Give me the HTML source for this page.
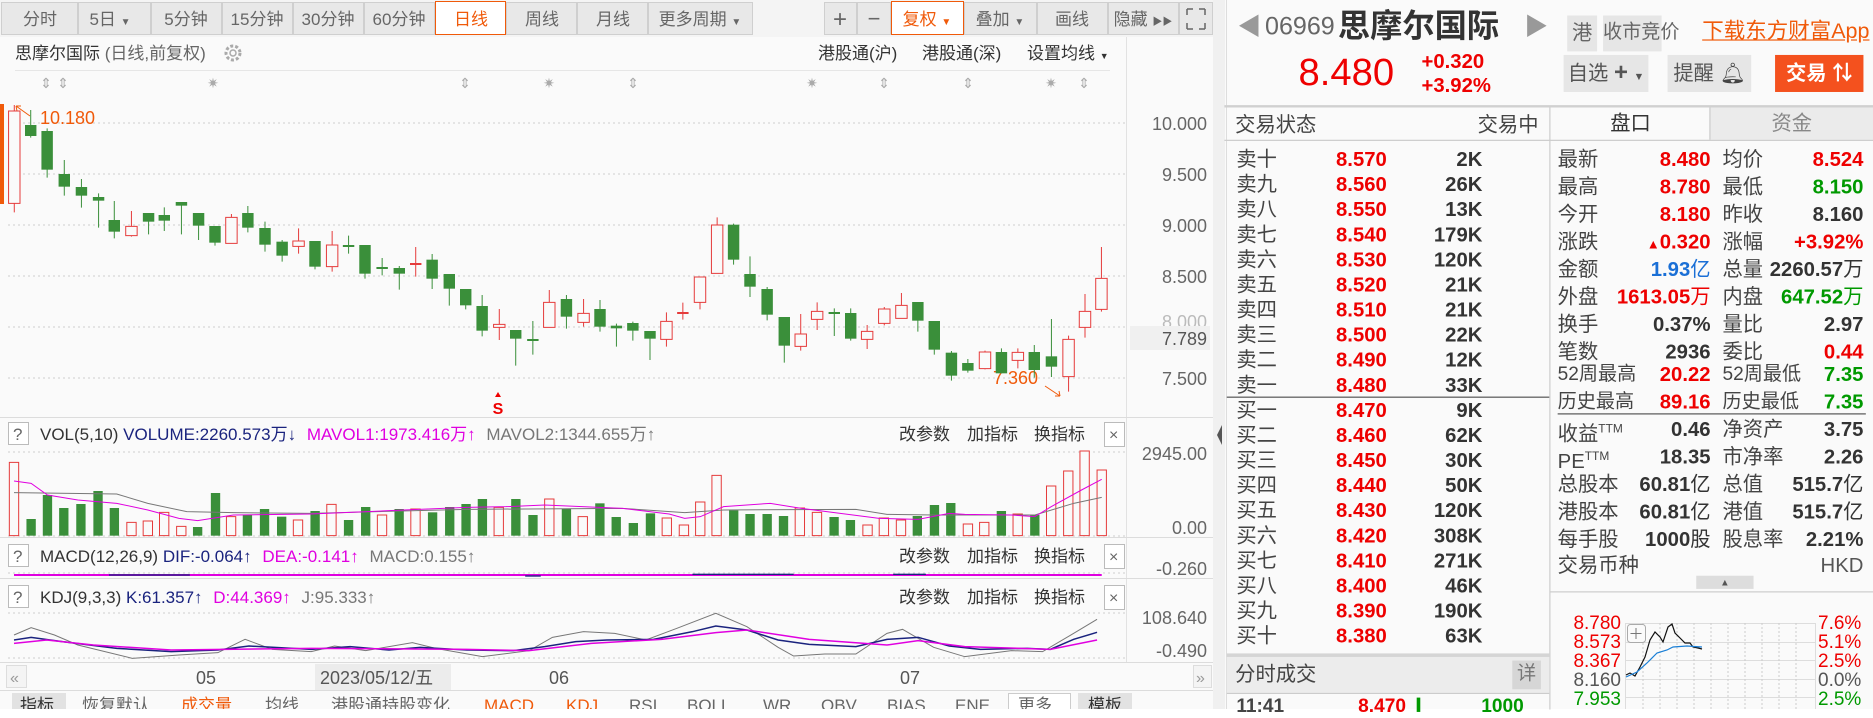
<!DOCTYPE html>
<html><head><meta charset="utf-8">
<style>
*{margin:0;padding:0;box-sizing:border-box}
body{width:1873px;height:709px;overflow:hidden;background:#fff;font-family:"Liberation Sans","Noto Sans CJK SC",sans-serif;position:relative}
#svg{position:absolute;left:0;top:0}
#rp{position:absolute;left:0;top:0;width:1568px;height:594px;transform:scale(1.19452);transform-origin:0 0;pointer-events:none}
#rp div{position:absolute;white-space:nowrap}
.l{color:#444;font-size:17px;line-height:20px}
.v{font-weight:bold;font-size:17px;line-height:20px;text-align:right}
.r{color:#e00}.g{color:#090}.k{color:#333}.b{color:#1a6fd6}
.btn{background:#e6e6e6;color:#555;font-size:17px;line-height:30px;text-align:center}
</style></head><body>
<svg id="svg" width="1873" height="709" viewBox="0 0 1873 709" font-family="Liberation Sans, Noto Sans CJK SC, sans-serif">
<rect x="0" y="0" width="1225" height="709" fill="#fafafa"/>
<rect x="1213" y="0" width="12" height="709" fill="#f0f0f0"/>
<path d="M1222 425l-5 10 5 10z" fill="#555"/>
<!-- toolbar -->
<rect x="0" y="0" width="1213" height="37" fill="#f4f4f4"/>
<g fill="#e8e8e8" stroke="#cfcfcf">
<rect x="1.5" y="2.5" width="76" height="32"/><rect x="78.5" y="2.5" width="72" height="32"/><rect x="151.5" y="2.5" width="70" height="32"/><rect x="222.5" y="2.5" width="70" height="32"/><rect x="293.5" y="2.5" width="70" height="32"/><rect x="364.5" y="2.5" width="70" height="32"/><rect x="506.5" y="2.5" width="70" height="32"/><rect x="577.5" y="2.5" width="70" height="32"/><rect x="648.5" y="2.5" width="104" height="32"/>
<rect x="824.5" y="2.5" width="32" height="32"/><rect x="857.5" y="2.5" width="33" height="32"/><rect x="964.5" y="2.5" width="72" height="32"/><rect x="1037.5" y="2.5" width="70" height="32"/><rect x="1108.5" y="2.5" width="70" height="32"/><rect x="1179.5" y="2.5" width="33" height="32"/>
</g>
<rect x="435.5" y="1.5" width="70" height="33" fill="#fff" stroke="#f05a0a"/>
<rect x="891.5" y="1.5" width="72" height="33" fill="#fff" stroke="#f05a0a"/>
<g font-size="17" fill="#666" text-anchor="middle">
<text x="40" y="25">分时</text><text x="110" y="25">5日 <tspan font-size="10">▼</tspan></text><text x="186" y="25">5分钟</text><text x="257" y="25">15分钟</text><text x="328" y="25">30分钟</text><text x="399" y="25">60分钟</text><text x="471" y="25" fill="#f05a0a">日线</text><text x="542" y="25">周线</text><text x="613" y="25">月线</text><text x="700" y="25">更多周期 <tspan font-size="10">▼</tspan></text>
<text x="840" y="27" font-size="24">+</text><text x="874" y="26" font-size="22">−</text><text x="927" y="25" fill="#f05a0a">复权 <tspan font-size="10">▼</tspan></text><text x="1000" y="25">叠加 <tspan font-size="10">▼</tspan></text><text x="1072" y="25">画线</text><text x="1143" y="25">隐藏 <tspan font-size="10">▶▶</tspan></text>
</g>
<path d="M1187 9h6M1187 9v6M1205 9h-6M1205 9v6M1187 29h6M1187 29v-6M1205 29h-6M1205 29v-6" stroke="#666" stroke-width="1.5" fill="none"/>
<!-- header -->
<text x="15" y="59" font-size="17" fill="#333">思摩尔国际 <tspan fill="#666">(日线,前复权)</tspan></text>
<circle cx="233" cy="53" r="7" fill="none" stroke="#aaa" stroke-width="3" stroke-dasharray="3 2"/><circle cx="233" cy="53" r="3" fill="none" stroke="#aaa" stroke-width="1.5"/>
<g font-size="17" fill="#333"><text x="818" y="59">港股通(沪)</text><text x="922" y="59">港股通(深)</text><text x="1027" y="59">设置均线 <tspan font-size="9">▼</tspan></text></g>
<line x1="15" y1="70.5" x2="1110" y2="70.5" stroke="#e6e6e6"/>
<g font-size="14" fill="#aaa" text-anchor="middle"><text x="46" y="88">⇕</text><text x="63" y="88">⇕</text><text x="465" y="88">⇕</text><text x="633" y="88">⇕</text><text x="884" y="88">⇕</text><text x="968" y="88">⇕</text><text x="1084" y="88">⇕</text>
<text x="213" y="88">✷</text><text x="549" y="88">✷</text><text x="812" y="88">✷</text><text x="1051" y="88">✷</text></g>
<!-- main chart -->
<rect x="0" y="104" width="4" height="100" fill="#f05a0a"/>
<line x1="1126.5" y1="37" x2="1126.5" y2="662" stroke="#e2e2e2"/>
<g stroke="#cfcfcf" stroke-dasharray="2 3"><line x1="8" y1="123" x2="1126" y2="123"/><line x1="8" y1="174" x2="1126" y2="174"/><line x1="8" y1="225" x2="1126" y2="225"/><line x1="8" y1="276" x2="1126" y2="276"/><line x1="8" y1="327" x2="1126" y2="327"/><line x1="8" y1="378" x2="1126" y2="378"/></g>
<g font-size="18" fill="#666" text-anchor="end"><text x="1207" y="130">10.000</text><text x="1207" y="181">9.500</text><text x="1207" y="232">9.000</text><text x="1207" y="283">8.500</text><text x="1207" y="385">7.500</text><text x="1207" y="328" fill="#bbb">8.000</text></g>
<rect x="1130" y="326" width="80" height="24" fill="#f0f0f0"/><text x="1207" y="345" font-size="18" fill="#555" text-anchor="end">7.789</text>
<text x="40" y="124" font-size="18" fill="#f05a0a">10.180</text><path d="M16 106l14 10M16 106l5 0M16 106l1 5" stroke="#f05a0a" fill="none"/>
<text x="993" y="384" font-size="18" fill="#f05a0a">7.360</text><path d="M1045 386l15 10M1060 396l-5 0M1060 396l-1-5" stroke="#f05a0a" fill="none"/>
<text x="498" y="414" font-size="16" font-weight="bold" fill="#e00" text-anchor="middle">S</text><path d="M495 397l3-5 3 5z" fill="#e00"/>
<g transform="translate(0,95) scale(0.714286,0.333333)">
<path vector-effect="non-scaling-stroke" stroke="#3a8f3a" stroke-width="1" fill="none" d="M43 45V128M66 100V248M90 195V302M114 252V338M138 295V398M160 318V430M208 354V418M230 337V408M254 321V418M278 354V435M301 393V452M347 333V412M371 380V470M395 435V500M441 438V523M488 422V476M511 450V551M535 489V541M559 513V584M605 477V582M629 537V632M652 582V643M675 600V724M722 705V812M746 678V779M793 600V701M840 615V710M863 686V755M886 680V737M910 708V795M1027 386V509M1050 484V606M1074 576V676M1098 666V803M1168 640V723M1191 640V737M1285 621V710M1308 678V779M1332 768V857M1355 792V833M1402 760V835M1448 750V848M1472 672V846"/>
<path vector-effect="non-scaling-stroke" stroke="#e53b3b" stroke-width="1" fill="none" d="M20 30V352M184 348V425M324 357V445M418 400V476M465 408V530M582 456V545M699 642V735M769 585V697M817 612V695M933 652V755M956 623V674M980 546V643M1004 367V535M1121 657V767M1144 622V705M1214 690V762M1238 636V691M1262 594V670M1379 767V823M1425 760V820M1496 722V890M1519 597V728M1542 456V650"/>
<g fill="#3a8f3a">
<rect x="35" y="90" width="16" height="33"/><rect x="58" y="108" width="16" height="116"/><rect x="82" y="237" width="16" height="38"/><rect x="106" y="276" width="16" height="26"/><rect x="130" y="306" width="16" height="11"/><rect x="152" y="375" width="16" height="35"/><rect x="200" y="354" width="16" height="26"/><rect x="222" y="360" width="16" height="17"/><rect x="246" y="321" width="16" height="11"/><rect x="270" y="354" width="16" height="38"/><rect x="293" y="393" width="16" height="50"/><rect x="339" y="354" width="16" height="44"/><rect x="363" y="399" width="16" height="50"/><rect x="387" y="440" width="16" height="42"/><rect x="433" y="438" width="16" height="77"/><rect x="480" y="450" width="16" height="6"/><rect x="503" y="450" width="16" height="86"/><rect x="527" y="516" width="16" height="6"/><rect x="551" y="519" width="16" height="17"/><rect x="597" y="494" width="16" height="57"/><rect x="621" y="537" width="16" height="44"/><rect x="644" y="582" width="16" height="49"/><rect x="667" y="633" width="16" height="74"/><rect x="714" y="705" width="16" height="26"/><rect x="738" y="732" width="16" height="6"/><rect x="785" y="612" width="16" height="53"/><rect x="832" y="642" width="16" height="53"/><rect x="855" y="692" width="16" height="8"/><rect x="878" y="684" width="16" height="23"/><rect x="902" y="708" width="16" height="23"/><rect x="1019" y="389" width="16" height="105"/><rect x="1042" y="537" width="16" height="38"/><rect x="1066" y="582" width="16" height="77"/><rect x="1090" y="666" width="16" height="86"/><rect x="1160" y="651" width="16" height="6"/><rect x="1183" y="654" width="16" height="77"/><rect x="1277" y="621" width="16" height="56"/><rect x="1300" y="678" width="16" height="86"/><rect x="1324" y="773" width="16" height="69"/><rect x="1347" y="804" width="16" height="23"/><rect x="1394" y="771" width="16" height="64"/><rect x="1440" y="771" width="16" height="54"/><rect x="1464" y="784" width="16" height="31"/>
</g>
<g fill="#fafafa" stroke="#e53b3b" vector-effect="non-scaling-stroke">
<rect vector-effect="non-scaling-stroke" x="12" y="48" width="16" height="277"/><rect vector-effect="non-scaling-stroke" x="176" y="394" width="16" height="28"/><rect vector-effect="non-scaling-stroke" x="316" y="367" width="16" height="78"/><rect vector-effect="non-scaling-stroke" x="410" y="438" width="16" height="16"/><rect vector-effect="non-scaling-stroke" x="457" y="450" width="16" height="65"/><rect vector-effect="non-scaling-stroke" x="691" y="688" width="16" height="9"/><rect vector-effect="non-scaling-stroke" x="761" y="622" width="16" height="75"/><rect vector-effect="non-scaling-stroke" x="809" y="655" width="16" height="27"/><rect vector-effect="non-scaling-stroke" x="925" y="679" width="16" height="54"/><rect vector-effect="non-scaling-stroke" x="972" y="546" width="16" height="76"/><rect vector-effect="non-scaling-stroke" x="996" y="390" width="16" height="145"/><rect vector-effect="non-scaling-stroke" x="1113" y="717" width="16" height="37"/><rect vector-effect="non-scaling-stroke" x="1136" y="649" width="16" height="24"/><rect vector-effect="non-scaling-stroke" x="1206" y="709" width="16" height="24"/><rect vector-effect="non-scaling-stroke" x="1230" y="642" width="16" height="43"/><rect vector-effect="non-scaling-stroke" x="1254" y="631" width="16" height="39"/><rect vector-effect="non-scaling-stroke" x="1371" y="771" width="16" height="50"/><rect vector-effect="non-scaling-stroke" x="1417" y="772" width="16" height="24"/><rect vector-effect="non-scaling-stroke" x="1488" y="733" width="16" height="112"/><rect vector-effect="non-scaling-stroke" x="1511" y="649" width="16" height="48"/><rect vector-effect="non-scaling-stroke" x="1534" y="550" width="16" height="93"/>
</g>
<rect x="574" y="504" width="16" height="6" fill="#e53b3b"/><rect x="948" y="651" width="16" height="6" fill="#e53b3b"/>
</g>
<!-- panels -->
<g stroke="#dcdcdc"><line x1="0" y1="417.5" x2="1213" y2="417.5"/><line x1="0" y1="537.5" x2="1213" y2="537.5"/><line x1="0" y1="578.5" x2="1213" y2="578.5"/><line x1="0" y1="662.5" x2="1213" y2="662.5"/><line x1="0" y1="690.5" x2="1213" y2="690.5"/></g>
<g font-size="17">
<rect x="8.5" y="422.5" width="20" height="22" fill="#fff" stroke="#bbb"/><text x="13" y="440" fill="#666">?</text>
<text x="40" y="440" fill="#333">VOL(5,10) <tspan fill="#1a237e">VOLUME:2260.573万↓</tspan> <tspan fill="#e000e0" dx="6">MAVOL1:1973.416万↑</tspan> <tspan fill="#777" dx="6">MAVOL2:1344.655万↑</tspan></text>
<rect x="8.5" y="544.5" width="20" height="22" fill="#fff" stroke="#bbb"/><text x="13" y="562" fill="#666">?</text>
<text x="40" y="562" fill="#333">MACD(12,26,9) <tspan fill="#1a237e">DIF:-0.064↑</tspan> <tspan fill="#e000e0" dx="6">DEA:-0.141↑</tspan> <tspan fill="#777" dx="6">MACD:0.155↑</tspan></text>
<rect x="8.5" y="585.5" width="20" height="22" fill="#fff" stroke="#bbb"/><text x="13" y="603" fill="#666">?</text>
<text x="40" y="603" fill="#333">KDJ(9,3,3) <tspan fill="#1a237e">K:61.357↑</tspan> <tspan fill="#e000e0" dx="6">D:44.369↑</tspan> <tspan fill="#777" dx="6">J:95.333↑</tspan></text>
<g fill="#333"><text x="899" y="440">改参数</text><text x="967" y="440">加指标</text><text x="1034" y="440">换指标</text><text x="899" y="562">改参数</text><text x="967" y="562">加指标</text><text x="1034" y="562">换指标</text><text x="899" y="603">改参数</text><text x="967" y="603">加指标</text><text x="1034" y="603">换指标</text></g>
<g fill="#fff" stroke="#bbb"><rect x="1104.5" y="422.5" width="20" height="24"/><rect x="1104.5" y="544.5" width="20" height="24"/><rect x="1104.5" y="585.5" width="20" height="24"/></g>
<g fill="#666" font-size="16"><text x="1109" y="440">×</text><text x="1109" y="562">×</text><text x="1109" y="603">×</text></g>
</g>
<g stroke="#cfcfcf" stroke-dasharray="2 3"><line x1="8" y1="452" x2="1126" y2="452"/><line x1="8" y1="536" x2="1126" y2="536"/><line x1="8" y1="573" x2="1126" y2="573"/><line x1="8" y1="613" x2="1126" y2="613"/><line x1="8" y1="658" x2="1126" y2="658"/></g>
<g font-size="18" fill="#666" text-anchor="end"><text x="1207" y="460">2945.00</text><text x="1207" y="534">0.00</text><text x="1207" y="575">-0.260</text><text x="1207" y="624">108.640</text><text x="1207" y="657">-0.490</text></g>
<g transform="translate(0,400) scale(0.77806,0.333333)">
<g fill="#3a8f3a"><rect x="34" y="357" width="12" height="50"/><rect x="55" y="285" width="12" height="122"/><rect x="76" y="324" width="12" height="83"/><rect x="98" y="312" width="12" height="95"/><rect x="120" y="273" width="12" height="134"/><rect x="141" y="324" width="12" height="83"/><rect x="248" y="381" width="12" height="26"/><rect x="271" y="279" width="12" height="128"/><rect x="312" y="344" width="12" height="63"/><rect x="334" y="327" width="12" height="80"/><rect x="356" y="350" width="12" height="57"/><rect x="399" y="333" width="12" height="74"/><rect x="442" y="360" width="12" height="47"/><rect x="464" y="321" width="12" height="86"/><rect x="507" y="327" width="12" height="80"/><rect x="550" y="337" width="12" height="70"/><rect x="572" y="321" width="12" height="86"/><rect x="593" y="312" width="12" height="95"/><rect x="614" y="297" width="12" height="110"/><rect x="657" y="297" width="12" height="110"/><rect x="679" y="345" width="12" height="62"/><rect x="722" y="327" width="12" height="80"/><rect x="765" y="310" width="12" height="97"/><rect x="786" y="351" width="12" height="56"/><rect x="808" y="369" width="12" height="38"/><rect x="830" y="340" width="12" height="67"/><rect x="937" y="331" width="12" height="76"/><rect x="958" y="342" width="12" height="65"/><rect x="980" y="342" width="12" height="65"/><rect x="1001" y="348" width="12" height="59"/><rect x="1066" y="351" width="12" height="56"/><rect x="1087" y="360" width="12" height="47"/><rect x="1173" y="348" width="12" height="59"/><rect x="1195" y="315" width="12" height="92"/><rect x="1216" y="309" width="12" height="98"/><rect x="1281" y="333" width="12" height="74"/><rect x="1324" y="345" width="12" height="62"/></g>
<g fill="#fafafa" stroke="#e53b3b"><rect vector-effect="non-scaling-stroke" x="12" y="187" width="12" height="220"/><rect vector-effect="non-scaling-stroke" x="163" y="367" width="12" height="40"/><rect vector-effect="non-scaling-stroke" x="184" y="363" width="12" height="44"/><rect vector-effect="non-scaling-stroke" x="205" y="337" width="12" height="70"/><rect vector-effect="non-scaling-stroke" x="227" y="379" width="12" height="28"/><rect vector-effect="non-scaling-stroke" x="291" y="350" width="12" height="57"/><rect vector-effect="non-scaling-stroke" x="377" y="360" width="12" height="47"/><rect vector-effect="non-scaling-stroke" x="420" y="313" width="12" height="94"/><rect vector-effect="non-scaling-stroke" x="485" y="345" width="12" height="62"/><rect vector-effect="non-scaling-stroke" x="528" y="327" width="12" height="80"/><rect vector-effect="non-scaling-stroke" x="635" y="322" width="12" height="85"/><rect vector-effect="non-scaling-stroke" x="700" y="297" width="12" height="110"/><rect vector-effect="non-scaling-stroke" x="743" y="350" width="12" height="57"/><rect vector-effect="non-scaling-stroke" x="851" y="354" width="12" height="53"/><rect vector-effect="non-scaling-stroke" x="873" y="375" width="12" height="32"/><rect vector-effect="non-scaling-stroke" x="894" y="306" width="12" height="101"/><rect vector-effect="non-scaling-stroke" x="915" y="226" width="12" height="181"/><rect vector-effect="non-scaling-stroke" x="1022" y="324" width="12" height="83"/><rect vector-effect="non-scaling-stroke" x="1044" y="337" width="12" height="70"/><rect vector-effect="non-scaling-stroke" x="1109" y="375" width="12" height="32"/><rect vector-effect="non-scaling-stroke" x="1130" y="354" width="12" height="53"/><rect vector-effect="non-scaling-stroke" x="1152" y="360" width="12" height="47"/><rect vector-effect="non-scaling-stroke" x="1238" y="372" width="12" height="35"/><rect vector-effect="non-scaling-stroke" x="1259" y="367" width="12" height="40"/><rect vector-effect="non-scaling-stroke" x="1302" y="342" width="12" height="65"/><rect vector-effect="non-scaling-stroke" x="1345" y="258" width="12" height="149"/><rect vector-effect="non-scaling-stroke" x="1367" y="213" width="12" height="194"/><rect vector-effect="non-scaling-stroke" x="1388" y="153" width="12" height="254"/><rect vector-effect="non-scaling-stroke" x="1410" y="210" width="12" height="197"/></g>
<g fill="none" vector-effect="non-scaling-stroke">
<polyline vector-effect="non-scaling-stroke" stroke="#777" points="18,278 150,282 190,310 240,335 300,338 400,340 600,328 800,325 880,338 930,330 1100,328 1140,343 1200,345 1330,345 1380,310 1416,292"/>
<polyline vector-effect="non-scaling-stroke" stroke="#e000e0" points="18,243 40,250 61,285 100,300 150,310 190,330 230,355 254,362 300,345 400,342 500,332 600,322 650,320 700,315 800,325 860,342 880,355 900,350 930,320 990,310 1030,325 1080,340 1130,355 1180,358 1220,340 1240,343 1300,345 1330,350 1351,320 1390,270 1416,238"/>
<line vector-effect="non-scaling-stroke" x1="18" y1="525" x2="1416" y2="525" stroke="#e000e0" stroke-width="2"/>
<polyline vector-effect="non-scaling-stroke" stroke="#777" points="18,705 40,683 70,705 100,735 170,775 230,765 280,758 315,718 350,748 400,755 430,738 470,752 530,728 560,745 620,770 680,752 710,712 750,695 790,700 830,720 870,685 920,640 960,680 1000,742 1020,768 1060,762 1100,762 1140,700 1160,688 1200,742 1240,770 1300,752 1340,755 1380,700 1410,658"/>
<polyline vector-effect="non-scaling-stroke" stroke="#1a237e" stroke-width="1.5" points="18,720 40,712 80,725 150,745 220,755 280,750 320,738 400,748 450,740 500,750 540,742 600,750 660,752 700,740 740,725 780,720 840,718 890,695 920,678 960,690 1000,720 1040,733 1100,740 1140,718 1180,712 1220,738 1260,748 1320,745 1350,748 1380,718 1410,697"/>
<polyline vector-effect="non-scaling-stroke" stroke="#e000e0" stroke-width="1.5" points="18,730 60,720 120,735 220,750 400,745 600,748 680,752 760,730 850,718 920,698 960,690 1040,718 1140,735 1180,722 1240,740 1350,748 1410,720"/>
</g>
<g fill="#1a237e"><rect x="140" y="523" width="104" height="4"/><rect x="890" y="521" width="130" height="4"/><rect x="1148" y="521" width="42" height="4"/><rect x="675" y="526" width="20" height="4"/></g>
</g>
<!-- date axis -->
<rect x="315" y="664" width="136" height="26" fill="#ececec"/>
<g font-size="18" fill="#555"><text x="196" y="684">05</text><text x="320" y="684">2023/05/12/五</text><text x="549" y="684">06</text><text x="900" y="684">07</text></g>
<rect x="6.5" y="665.5" width="20" height="22" fill="#f4f4f4" stroke="#ddd"/><text x="10" y="683" font-size="16" fill="#999">«</text>
<rect x="1193.5" y="665.5" width="18" height="22" fill="#f4f4f4" stroke="#ddd"/><text x="1196" y="683" font-size="16" fill="#999">»</text>
<!-- bottom tabs -->
<rect x="12" y="693" width="54" height="20" fill="#e2e2e2"/><rect x="1008.5" y="693.5" width="62" height="20" fill="#fff" stroke="#ccc"/><rect x="1078" y="693" width="54" height="20" fill="#e2e2e2"/>
<g font-size="17" fill="#666"><text x="20" y="711" fill="#333">指标</text><text x="82" y="711">恢复默认</text><text x="181" y="711" fill="#f05a0a">成交量</text><text x="265" y="711">均线</text><text x="331" y="711">港股通持股变化</text><text x="484" y="711" fill="#f05a0a">MACD</text><text x="566" y="711" fill="#f05a0a">KDJ</text><text x="629" y="711">RSI</text><text x="687" y="711">BOLL</text><text x="763" y="711">WR</text><text x="821" y="711">OBV</text><text x="887" y="711">BIAS</text><text x="955" y="711">ENE</text><text x="1018" y="711">更多</text><text x="1088" y="711" fill="#333">模板</text></g>
<!-- right panel bg / lines (real coords) -->
<rect x="1225" y="0" width="648" height="709" fill="#fafafa"/>
<line x1="1226.5" y1="0" x2="1226.5" y2="709" stroke="#ddd"/>
<!-- mini chart -->
<g stroke="#ddd"><line x1="1626" y1="623.5" x2="1815" y2="623.5"/><line x1="1626" y1="642.5" x2="1815" y2="642.5"/><line x1="1626" y1="660.5" x2="1815" y2="660.5"/><line x1="1626" y1="679.5" x2="1815" y2="679.5"/><line x1="1626" y1="697.5" x2="1815" y2="697.5"/><line x1="1815.5" y1="623" x2="1815.5" y2="709"/><line x1="1625.5" y1="623" x2="1625.5" y2="709"/></g>
<g stroke="#ccc" stroke-dasharray="2 2"><line x1="1643" y1="623" x2="1643" y2="709"/><line x1="1660" y1="623" x2="1660" y2="709"/><line x1="1677" y1="623" x2="1677" y2="709"/><line x1="1694" y1="623" x2="1694" y2="709"/><line x1="1711" y1="623" x2="1711" y2="709"/><line x1="1728" y1="623" x2="1728" y2="709"/><line x1="1745" y1="623" x2="1745" y2="709"/><line x1="1762" y1="623" x2="1762" y2="709"/><line x1="1779" y1="623" x2="1779" y2="709"/><line x1="1796" y1="623" x2="1796" y2="709"/></g>
<rect x="1627.5" y="624.5" width="18" height="18" rx="3" fill="#fafafa" stroke="#aaa"/><path d="M1636 628v11M1630.5 633.5h11" stroke="#777"/>
<polyline fill="none" stroke="#111" stroke-width="1.2" points="1626,675 1630,673 1635,676 1640,667 1645,657 1650,640 1655,632 1660,637 1663,642 1668,627 1672,624 1675,633 1680,638 1685,643 1690,643 1693,647 1698,648 1702,649"/>
<polyline fill="none" stroke="#1a7fd6" stroke-width="1.2" points="1626,677 1637,672 1647,663 1657,653 1667,650 1673,647 1687,646 1702,647"/>
<g font-size="19" text-anchor="end"><text x="1621" y="629" fill="#e00">8.780</text><text x="1621" y="648" fill="#e00">8.573</text><text x="1621" y="667" fill="#e00">8.367</text><text x="1621" y="686" fill="#555">8.160</text><text x="1621" y="705" fill="#090">7.953</text></g>
<g font-size="19"><text x="1818" y="629" fill="#e00">7.6%</text><text x="1818" y="648" fill="#e00">5.1%</text><text x="1818" y="667" fill="#e00">2.5%</text><text x="1818" y="686" fill="#555">0.0%</text><text x="1818" y="705" fill="#090">2.5%</text></g>
</svg>

<div id="rp">
<div style="left:1025px;top:88px;width:543px;height:2px;background:#d0d0d0"></div>
<div style="left:1298px;top:90px;width:133px;height:27px;background:#fafafa"></div>
<div style="left:1431px;top:90px;width:137px;height:27px;background:#ebebeb;border-left:1px solid #ccc"></div>
<div style="left:1025px;top:117px;width:543px;height:1px;background:#ccc"></div>
<div style="left:1297px;top:90px;width:1px;height:504px;background:#ccc"></div>
<div style="left:1027px;top:332px;width:270px;height:1px;background:#555"></div>
<div style="left:1304px;top:346px;width:258px;height:1px;background:#555"></div>
<div style="left:1298px;top:495px;width:270px;height:1px;background:#ccc"></div>
<div style="left:1420px;top:482px;width:48px;height:11px;background:#ddd;font-size:8px;line-height:11px;text-align:center;color:#555">▲</div>
<div style="left:1027px;top:547px;width:270px;height:3px;background:#d5d5d5"></div>
<div style="left:1027px;top:550px;width:270px;height:30px;background:#ececec"></div>
<div style="left:1034px;top:555px;font-size:17px;color:#444;line-height:20px">分时成交</div>
<div style="left:1266px;top:553px;width:24px;height:24px;background:#d6d6d6;color:#777;font-size:16px;line-height:24px;text-align:center">详</div>
<div style="left:1027px;top:580px;width:270px;height:1px;background:#ccc"></div>
<div style="left:1035px;top:583px;font-size:16px;font-weight:bold;color:#444">11:41</div>
<div style="left:1137px;top:583px;font-size:16px;font-weight:bold;color:#e00">8.470</div>
<div style="left:1186px;top:584px;width:3px;height:12px;background:#090"></div>
<div style="left:1240px;top:583px;font-size:16px;font-weight:bold;color:#090">1000</div>

<div style="left:1036px;top:10px;font-size:20px;color:#999;line-height:26px">◀</div>
<div style="left:1059px;top:9px;font-size:21px;color:#666;line-height:28px">06969</div>
<div style="left:1120px;top:5px;font-size:27px;font-weight:bold;color:#333;line-height:34px">思摩尔国际</div>
<div style="left:1276px;top:10px;font-size:20px;color:#999;line-height:26px">▶</div>
<div class="btn" style="left:1312px;top:13px;width:25px;height:30px;color:#666">港</div>
<div class="btn" style="left:1342px;top:13px;width:49px;height:30px;color:#666;font-size:16px">收市竞价</div>
<div style="left:1425px;top:13px;font-size:18px;color:#f05a0a;text-decoration:underline;line-height:26px">下载东方财富App</div>
<div style="left:1087px;top:40px;font-size:32px;color:#e00;line-height:40px">8.480</div>
<div style="left:1190px;top:42px;font-size:17px;font-weight:bold;color:#e00;line-height:20px">+0.320</div>
<div style="left:1190px;top:62px;font-size:17px;font-weight:bold;color:#e00;line-height:20px">+3.92%</div>
<div class="btn" style="left:1309px;top:46px;width:71px;height:31px;line-height:31px">自选 <b style="font-size:20px">+</b> <span style="font-size:9px">▼</span></div>
<div class="btn" style="left:1396px;top:46px;width:70px;height:31px;line-height:31px">提醒 <span style="color:#444">🔔︎</span></div>
<div class="btn" style="left:1486px;top:46px;width:74px;height:31px;line-height:31px;background:#f4511e;color:#fff;font-weight:bold">交易 ⇅</div>

<div class="l" style="left:1034px;top:95px">交易状态</div>
<div class="l" style="left:1237px;top:95px">交易中</div>
<div class="l" style="left:1348px;top:94px;color:#333">盘口</div>
<div class="l" style="left:1483px;top:94px;color:#888">资金</div>

<div class="l" style="left:1035px;top:124px">卖十</div><div class="v r" style="left:1100px;width:61px;top:124px">8.570</div><div class="v k" style="left:1180px;width:61px;top:124px">2K</div>
<div class="l" style="left:1035px;top:145px">卖九</div><div class="v r" style="left:1100px;width:61px;top:145px">8.560</div><div class="v k" style="left:1180px;width:61px;top:145px">26K</div>
<div class="l" style="left:1035px;top:166px">卖八</div><div class="v r" style="left:1100px;width:61px;top:166px">8.550</div><div class="v k" style="left:1180px;width:61px;top:166px">13K</div>
<div class="l" style="left:1035px;top:187px">卖七</div><div class="v r" style="left:1100px;width:61px;top:187px">8.540</div><div class="v k" style="left:1180px;width:61px;top:187px">179K</div>
<div class="l" style="left:1035px;top:208px">卖六</div><div class="v r" style="left:1100px;width:61px;top:208px">8.530</div><div class="v k" style="left:1180px;width:61px;top:208px">120K</div>
<div class="l" style="left:1035px;top:229px">卖五</div><div class="v r" style="left:1100px;width:61px;top:229px">8.520</div><div class="v k" style="left:1180px;width:61px;top:229px">21K</div>
<div class="l" style="left:1035px;top:250px">卖四</div><div class="v r" style="left:1100px;width:61px;top:250px">8.510</div><div class="v k" style="left:1180px;width:61px;top:250px">21K</div>
<div class="l" style="left:1035px;top:271px">卖三</div><div class="v r" style="left:1100px;width:61px;top:271px">8.500</div><div class="v k" style="left:1180px;width:61px;top:271px">22K</div>
<div class="l" style="left:1035px;top:292px">卖二</div><div class="v r" style="left:1100px;width:61px;top:292px">8.490</div><div class="v k" style="left:1180px;width:61px;top:292px">12K</div>
<div class="l" style="left:1035px;top:313px">卖一</div><div class="v r" style="left:1100px;width:61px;top:313px">8.480</div><div class="v k" style="left:1180px;width:61px;top:313px">33K</div>
<div class="l" style="left:1035px;top:334px">买一</div><div class="v r" style="left:1100px;width:61px;top:334px">8.470</div><div class="v k" style="left:1180px;width:61px;top:334px">9K</div>
<div class="l" style="left:1035px;top:355px">买二</div><div class="v r" style="left:1100px;width:61px;top:355px">8.460</div><div class="v k" style="left:1180px;width:61px;top:355px">62K</div>
<div class="l" style="left:1035px;top:376px">买三</div><div class="v r" style="left:1100px;width:61px;top:376px">8.450</div><div class="v k" style="left:1180px;width:61px;top:376px">30K</div>
<div class="l" style="left:1035px;top:397px">买四</div><div class="v r" style="left:1100px;width:61px;top:397px">8.440</div><div class="v k" style="left:1180px;width:61px;top:397px">50K</div>
<div class="l" style="left:1035px;top:418px">买五</div><div class="v r" style="left:1100px;width:61px;top:418px">8.430</div><div class="v k" style="left:1180px;width:61px;top:418px">120K</div>
<div class="l" style="left:1035px;top:439px">买六</div><div class="v r" style="left:1100px;width:61px;top:439px">8.420</div><div class="v k" style="left:1180px;width:61px;top:439px">308K</div>
<div class="l" style="left:1035px;top:460px">买七</div><div class="v r" style="left:1100px;width:61px;top:460px">8.410</div><div class="v k" style="left:1180px;width:61px;top:460px">271K</div>
<div class="l" style="left:1035px;top:481px">买八</div><div class="v r" style="left:1100px;width:61px;top:481px">8.400</div><div class="v k" style="left:1180px;width:61px;top:481px">46K</div>
<div class="l" style="left:1035px;top:502px">买九</div><div class="v r" style="left:1100px;width:61px;top:502px">8.390</div><div class="v k" style="left:1180px;width:61px;top:502px">190K</div>
<div class="l" style="left:1035px;top:523px">买十</div><div class="v r" style="left:1100px;width:61px;top:523px">8.380</div><div class="v k" style="left:1180px;width:61px;top:523px">63K</div>

<div class="l" style="left:1304px;top:124px">最新</div><div class="v r" style="left:1352px;width:80px;top:124px">8.480</div><div class="l" style="left:1442px;top:124px">均价</div><div class="v r" style="left:1480px;width:80px;top:124px">8.524</div>
<div class="l" style="left:1304px;top:147px">最高</div><div class="v r" style="left:1352px;width:80px;top:147px">8.780</div><div class="l" style="left:1442px;top:147px">最低</div><div class="v g" style="left:1480px;width:80px;top:147px">8.150</div>
<div class="l" style="left:1304px;top:170px">今开</div><div class="v r" style="left:1352px;width:80px;top:170px">8.180</div><div class="l" style="left:1442px;top:170px">昨收</div><div class="v k" style="left:1480px;width:80px;top:170px">8.160</div>
<div class="l" style="left:1304px;top:193px">涨跌</div><div class="v r" style="left:1352px;width:80px;top:193px"><span style="font-size:11px">▲</span>0.320</div><div class="l" style="left:1442px;top:193px">涨幅</div><div class="v r" style="left:1480px;width:80px;top:193px">+3.92%</div>
<div class="l" style="left:1304px;top:216px">金额</div><div class="v b" style="left:1352px;width:80px;top:216px">1.93<span style="font-weight:normal">亿</span></div><div class="l" style="left:1442px;top:216px">总量</div><div class="v k" style="left:1470px;width:90px;top:216px">2260.57<span style="font-weight:normal">万</span></div>
<div class="l" style="left:1304px;top:239px">外盘</div><div class="v r" style="left:1342px;width:90px;top:239px">1613.05<span style="font-weight:normal">万</span></div><div class="l" style="left:1442px;top:239px">内盘</div><div class="v g" style="left:1480px;width:80px;top:239px">647.52<span style="font-weight:normal">万</span></div>
<div class="l" style="left:1304px;top:262px">换手</div><div class="v k" style="left:1352px;width:80px;top:262px">0.37%</div><div class="l" style="left:1442px;top:262px">量比</div><div class="v k" style="left:1480px;width:80px;top:262px">2.97</div>
<div class="l" style="left:1304px;top:285px">笔数</div><div class="v k" style="left:1352px;width:80px;top:285px">2936</div><div class="l" style="left:1442px;top:285px">委比</div><div class="v r" style="left:1480px;width:80px;top:285px">0.44</div>
<div class="l" style="left:1304px;top:304px;font-size:16px">52周最高</div><div class="v r" style="left:1352px;width:80px;top:304px">20.22</div><div class="l" style="left:1442px;top:304px;font-size:16px">52周最低</div><div class="v g" style="left:1480px;width:80px;top:304px">7.35</div>
<div class="l" style="left:1304px;top:327px;font-size:16px">历史最高</div><div class="v r" style="left:1352px;width:80px;top:327px">89.16</div><div class="l" style="left:1442px;top:327px;font-size:16px">历史最低</div><div class="v g" style="left:1480px;width:80px;top:327px">7.35</div>
<div class="l" style="left:1304px;top:350px">收益<sup style="font-size:10px">TTM</sup></div><div class="v k" style="left:1352px;width:80px;top:350px">0.46</div><div class="l" style="left:1442px;top:350px">净资产</div><div class="v k" style="left:1480px;width:80px;top:350px">3.75</div>
<div class="l" style="left:1304px;top:373px">PE<sup style="font-size:10px">TTM</sup></div><div class="v k" style="left:1352px;width:80px;top:373px">18.35</div><div class="l" style="left:1442px;top:373px">市净率</div><div class="v k" style="left:1480px;width:80px;top:373px">2.26</div>
<div class="l" style="left:1304px;top:396px">总股本</div><div class="v k" style="left:1352px;width:80px;top:396px">60.81<span style="font-weight:normal">亿</span></div><div class="l" style="left:1442px;top:396px">总值</div><div class="v k" style="left:1470px;width:90px;top:396px">515.7<span style="font-weight:normal">亿</span></div>
<div class="l" style="left:1304px;top:419px">港股本</div><div class="v k" style="left:1352px;width:80px;top:419px">60.81<span style="font-weight:normal">亿</span></div><div class="l" style="left:1442px;top:419px">港值</div><div class="v k" style="left:1470px;width:90px;top:419px">515.7<span style="font-weight:normal">亿</span></div>
<div class="l" style="left:1304px;top:442px">每手股</div><div class="v k" style="left:1352px;width:80px;top:442px">1000<span style="font-weight:normal">股</span></div><div class="l" style="left:1442px;top:442px">股息率</div><div class="v k" style="left:1480px;width:80px;top:442px">2.21%</div>
<div class="l" style="left:1304px;top:464px">交易币种</div><div class="v" style="left:1480px;width:80px;top:464px;color:#555;font-weight:normal">HKD</div>
</div>
</body></html>
